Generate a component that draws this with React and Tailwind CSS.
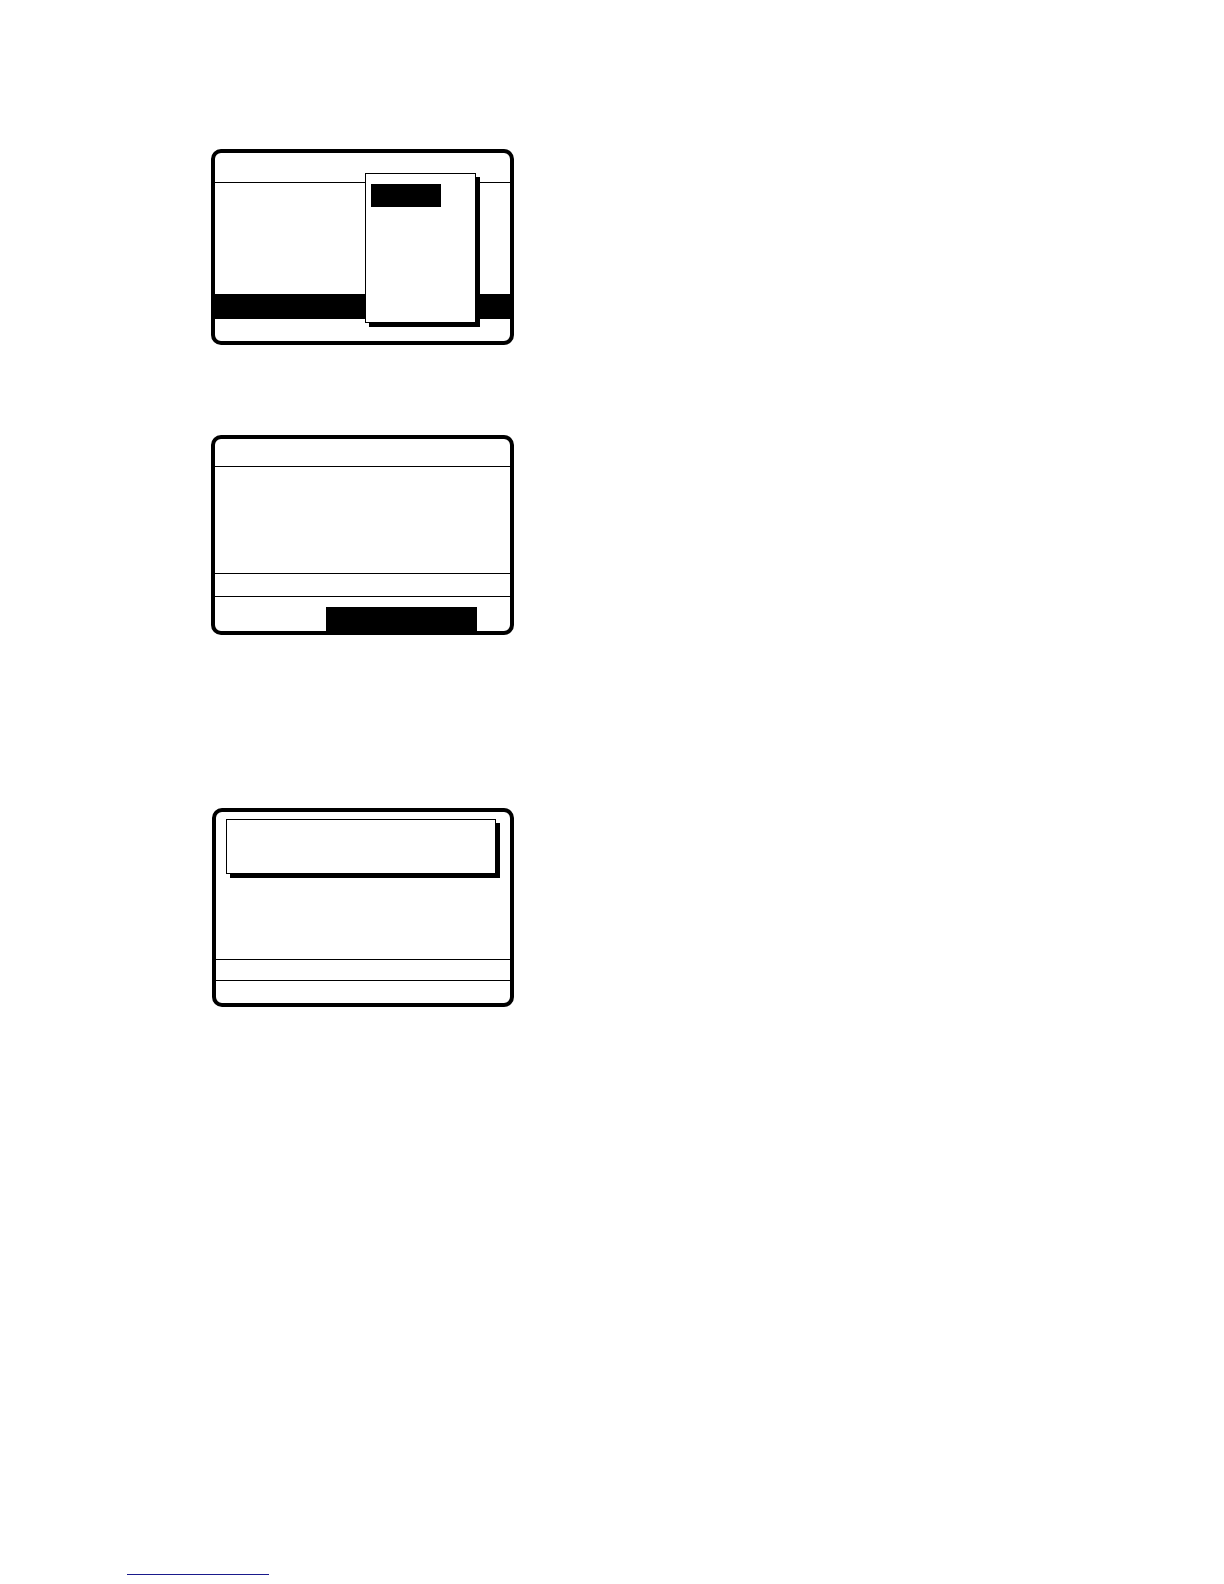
export default function App() {
  return (
    <div className="min-h-[1584px] w-[1224px] bg-white font-['Liberation_Sans',sans-serif]">
      <div className="flex flex-col pl-[211px] pt-[149px]">
        {/* Screen 1 */}
        <div className="relative flex h-[196px] w-[303px] flex-col rounded-[10px] border-4 border-black bg-white">
          <div className="h-[30px] border-b border-black" />
          <div className="h-[111px]" />
          <div className="h-[25px] bg-black" />
          <div className="flex-1" />
          <div className="absolute left-[150px] top-[20px] h-[150px] w-[111px] border border-black bg-white shadow-[4px_4px_0_0_#000]">
            <div className="ml-[5px] mt-[10px] h-[23px] w-[70px] bg-black" />
          </div>
        </div>

        {/* Screen 2 */}
        <div className="mt-[90px] flex h-[200px] w-[303px] flex-col rounded-[10px] border-4 border-black bg-white">
          <div className="h-[28px] border-b border-black" />
          <div className="h-[107px] border-b border-black" />
          <div className="h-[23px] border-b border-black" />
          <div className="flex flex-1 items-end pl-[111px]">
            <div className="h-[24px] w-[151px] bg-black" />
          </div>
        </div>

        {/* Screen 3 */}
        <div className="ml-px mt-[173px] flex h-[199px] w-[302px] flex-col rounded-[10px] border-4 border-black bg-white">
          <div className="h-[147px] pl-[10px] pt-[7px]">
            <div className="h-[55px] w-[270px] border border-black bg-white shadow-[4px_4px_0_0_#000]" />
          </div>
          <div className="h-[22px] border-y border-black" />
          <div className="flex-1" />
        </div>
      </div>

      <div className="pl-[127px] pt-[567px]">
        <div className="h-px w-[142px] bg-[#1a1a8c]" />
      </div>
    </div>
  );
}
